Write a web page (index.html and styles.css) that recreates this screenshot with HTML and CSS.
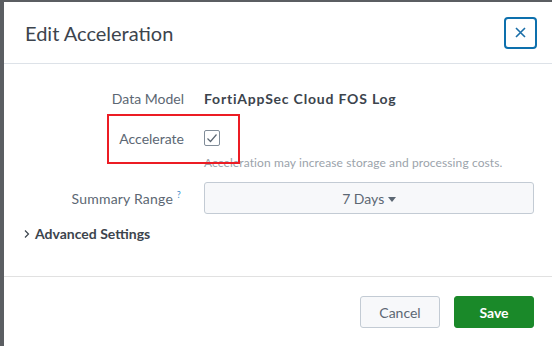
FILE: index.html
```
<!DOCTYPE html>
<html lang="en">
<head>
    <meta charset="UTF-8">
    <title>Edit Acceleration</title>
    <link rel="stylesheet" href="styles.css">
</head>
<body>
    <div class="modal">
        <div class="modal-header">
            <h2 class="modal-title">Edit Acceleration</h2>
            <button class="close-btn" aria-label="Close">
                <svg width="11" height="11" viewBox="0 0 11 11"><path d="M1 1 L10 10 M10 1 L1 10" stroke="#1a6ea8" stroke-width="1.6" fill="none"/></svg>
            </button>
        </div>
        <div class="modal-body">
            <div class="form-row">
                <label class="form-label">Data Model</label>
                <div class="form-value">FortiAppSec Cloud FOS Log</div>
            </div>
            <div class="form-row accel-row">
                <label class="form-label">Accelerate</label>
                <div class="control">
                    <span class="checkbox">
                        <svg width="12" height="10" viewBox="0 0 12 10"><path d="M1.5 5.5 L4.5 8.5 L10.5 1.5" stroke="#5c6773" stroke-width="1.2" fill="none"/></svg>
                    </span>
                </div>
                <div class="highlight"></div>
            </div>
            <div class="help-text">Acceleration may increase storage and processing costs.</div>
            <div class="form-row range-row">
                <label class="form-label">Summary Range <sup class="tip">?</sup></label>
                <button class="select-btn">7 Days <span class="caret"></span></button>
            </div>
            <div class="advanced">
                <svg width="8" height="10" viewBox="0 0 8 10"><path d="M2 1.5 L5.5 5 L2 8.5" stroke="#3c444d" stroke-width="1.2" fill="none"/></svg>
                <span>Advanced Settings</span>
            </div>
        </div>
        <div class="modal-footer">
            <button class="btn btn-cancel">Cancel</button>
            <button class="btn btn-save">Save</button>
        </div>
    </div>
</body>
</html>
```

FILE: styles.css
```
body {
    margin: 0;
    background: #5b5e62;
    font-family: Lato, "Open Sans", Arial, sans-serif;
    color: #3c444d;
    height: 346px;
    overflow: hidden;
}

.modal {
    margin: 2px 0 0 4px;
    background: #fff;
    height: 344px;
}

.modal-header {
    display: flex;
    align-items: center;
    justify-content: space-between;
    height: 61px;
    padding: 0 15px 0 21px;
    border-bottom: 1px solid #dde2e8;
}

.modal-title {
    margin: 0;
    font-size: 20px;
    font-weight: 400;
    color: #3c444d;
}

.close-btn {
    width: 33px;
    height: 32px;
    display: flex;
    align-items: center;
    justify-content: center;
    background: #fff;
    border: 2px solid #0d70ad;
    border-radius: 4px;
    padding: 0;
}

.modal-body {
    padding-top: 26px;
    height: 186px;
    border-bottom: 1px solid #e1e1e1;
}

.form-row {
    display: flex;
    align-items: center;
    position: relative;
}

.form-label {
    width: 200px;
    padding-right: 20px;
    text-align: right;
    font-size: 14px;
    color: #5c6773;
    box-sizing: border-box;
    flex-shrink: 0;
}

.form-value {
    font-size: 14px;
    font-weight: 700;
    letter-spacing: 0.8px;
    color: #3c444d;
}

.accel-row {
    margin-top: 22px;
    height: 18px;
}

.checkbox {
    display: flex;
    align-items: center;
    justify-content: center;
    width: 14px;
    height: 14px;
    border: 1px solid #818d99;
    border-radius: 2px;
}

.highlight {
    position: absolute;
    left: 103px;
    top: -15px;
    width: 129px;
    height: 46px;
    border: 2px solid #ec1c24;
}

.help-text {
    margin: 8px 0 0 200px;
    font-size: 12px;
    letter-spacing: 0.1px;
    color: #9ba3ab;
}

.range-row {
    margin-top: 12px;
}

.range-row .form-label {
    letter-spacing: 0.2px;
}

.tip {
    font-size: 9px;
    color: #3d8ec9;
    vertical-align: 6px;
    margin-right: 3px;
}

.select-btn {
    width: 330px;
    height: 32px;
    background: #f7f8fa;
    border: 1px solid #c3cbd4;
    border-radius: 3px;
    font-family: inherit;
    font-size: 14px;
    color: #5c6773;
}

.caret {
    display: inline-block;
    width: 0;
    height: 0;
    border-left: 4px solid transparent;
    border-right: 4px solid transparent;
    border-top: 5px solid #5c6773;
    vertical-align: 2px;
}

.advanced {
    display: flex;
    align-items: center;
    gap: 4px;
    margin: 11px 0 0 19px;
    font-size: 14px;
    font-weight: 700;
    color: #3c444d;
}

.modal-footer {
    display: flex;
    justify-content: flex-end;
    gap: 14px;
    padding: 19px 18px 0 0;
}

.btn {
    width: 80px;
    height: 32px;
    border-radius: 3px;
    font-family: inherit;
    font-size: 14px;
}

.btn-cancel {
    background: #f7f8fa;
    border: 1px solid #c3cbd4;
    color: #5c6773;
}

.btn-save {
    background: #1a8929;
    border: 1px solid #1a8929;
    color: #fff;
    font-weight: 700;
}
```
